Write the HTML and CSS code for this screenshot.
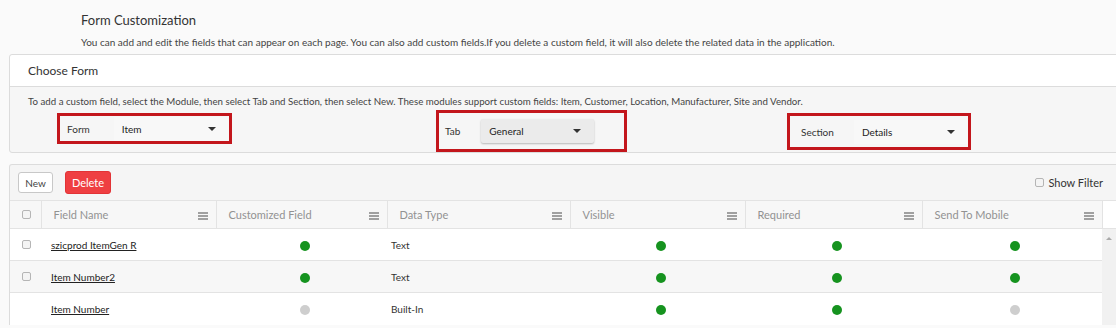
FILE: index.html
```html
<!DOCTYPE html>
<html lang="en">
<head>
    <meta charset="UTF-8">
    <title>Form Customization</title>
    <link rel="stylesheet" href="styles.css">
</head>
<body>
    <div class="page-head">
        <h2>Form Customization</h2>
        <p>You can add and edit the fields that can appear on each page. You can also add custom fields.If you delete a custom field, it will also delete the related data in the application.</p>
    </div>

    <div class="panel">
        <div class="panel-title">Choose Form</div>
        <div class="panel-body">
            <p class="hint">To add a custom field, select the Module, then select Tab and Section, then select New. These modules support custom fields: Item, Customer, Location, Manufacturer, Site and Vendor.</p>
            <div class="pickers">
                <div class="picker picker-form">
                    <span class="picker-label">Form</span>
                    <div class="select">Item<span class="caret"></span></div>
                </div>
                <div class="picker picker-tab">
                    <span class="picker-label">Tab</span>
                    <div class="select raised">General<span class="caret"></span></div>
                </div>
                <div class="picker picker-section">
                    <span class="picker-label">Section</span>
                    <div class="select">Details<span class="caret"></span></div>
                </div>
            </div>
        </div>
    </div>

    <div class="panel grid-panel">
        <div class="toolbar">
            <button class="btn">New</button>
            <button class="btn btn-danger">Delete</button>
            <label class="filter"><span class="check"></span>Show Filter</label>
        </div>
        <table class="grid">
            <colgroup>
                <col style="width:31px">
                <col style="width:175px">
                <col style="width:171px">
                <col style="width:183px">
                <col style="width:175px">
                <col style="width:177px">
                <col style="width:180px">
                <col style="width:15px">
            </colgroup>
            <thead>
                <tr>
                    <th class="cb"><span class="check"></span></th>
                    <th>Field Name<span class="menu"></span></th>
                    <th>Customized Field<span class="menu"></span></th>
                    <th>Data Type<span class="menu"></span></th>
                    <th>Visible<span class="menu"></span></th>
                    <th>Required<span class="menu"></span></th>
                    <th>Send To Mobile<span class="menu"></span></th>
                    <th class="sb-head"></th>
                </tr>
            </thead>
            <tbody>
                <tr>
                    <td class="cb"><span class="check"></span></td>
                    <td class="name"><a href="#">szicprod ItemGen R</a></td>
                    <td class="dot-cell"><span class="dot"></span></td>
                    <td class="type">Text</td>
                    <td class="dot-cell"><span class="dot"></span></td>
                    <td class="dot-cell"><span class="dot"></span></td>
                    <td class="dot-cell"><span class="dot"></span></td>
                    <td class="sb" rowspan="3"><span class="sb-up"></span></td>
                </tr>
                <tr class="alt">
                    <td class="cb"><span class="check"></span></td>
                    <td class="name"><a href="#">Item Number2</a></td>
                    <td class="dot-cell"><span class="dot"></span></td>
                    <td class="type">Text</td>
                    <td class="dot-cell"><span class="dot"></span></td>
                    <td class="dot-cell"><span class="dot"></span></td>
                    <td class="dot-cell"><span class="dot"></span></td>
                </tr>
                <tr>
                    <td class="cb"></td>
                    <td class="name"><a href="#">Item Number</a></td>
                    <td class="dot-cell"><span class="dot off"></span></td>
                    <td class="type">Built-In</td>
                    <td class="dot-cell"><span class="dot"></span></td>
                    <td class="dot-cell"><span class="dot"></span></td>
                    <td class="dot-cell"><span class="dot off"></span></td>
                </tr>
            </tbody>
        </table>
    </div>
</body>
</html>
```

FILE: styles.css
```css
* {
    margin: 0;
    padding: 0;
    box-sizing: border-box;
}

body {
    background: #fafafa;
    font-family: 'Lato', 'Open Sans', sans-serif;
    font-size: 11px;
    color: #333;
    overflow: hidden;
    width: 1116px;
    height: 328px;
}

.page-head {
    padding: 11px 0 0 81px;
    height: 54px;
}

.page-head h2 {
    font-size: 13px;
    font-weight: normal;
    color: #333;
    line-height: 18px;
}

.page-head p {
    margin-top: 6px;
    line-height: 14px;
    font-size: 10px;
    color: #444;
}

.panel {
    margin-left: 9px;
    width: 1120px;
    border: 1px solid #dcdcdc;
    border-radius: 3px;
    background: #f6f6f6;
}

.panel-title {
    height: 32px;
    line-height: 31px;
    padding-left: 18px;
    background: #fff;
    font-size: 12px;
    color: #333;
    border-bottom: 1px solid #dcdcdc;
    border-radius: 3px 3px 0 0;
}

.panel-body {
    padding: 7px 0 0 18px;
    height: 65px;
}

.hint {
    line-height: 14px;
    color: #444;
    font-size: 9.7px;
}

.pickers {
    display: flex;
    align-items: flex-start;
    margin-top: 2px;
    padding-left: 29px;
}

.picker {
    display: flex;
    align-items: center;
    border: 3px solid #c3161c;
    background: #f6f6f6;
}

.picker-label {
    font-size: 10px;
    color: #333;
}

.picker-form {
    width: 175px;
    height: 31px;
    margin-top: 3px;
    padding-left: 7px;
}

.picker-form .select {
    margin-left: 24px;
    width: 120px;
}

.picker-tab {
    width: 191px;
    height: 42px;
    margin-left: 204px;
    padding-left: 6px;
}

.picker-tab .select {
    margin-left: 21px;
    width: 113px;
}

.picker-section {
    width: 184px;
    height: 37px;
    margin-left: 160px;
    padding-left: 11px;
    margin-top: 3px;
}

.picker-section .select {
    margin-left: 20px;
    width: 129px;
}

.select {
    position: relative;
    height: 24px;
    line-height: 24px;
    padding-left: 8px;
    background: #f8f8f8;
    font-size: 10px;
    color: #222;
}

.select.raised {
    background: #ebebeb;
    border-radius: 2px;
    box-shadow: 0 1px 2px rgba(0, 0, 0, 0.25);
}

.caret {
    position: absolute;
    right: 13px;
    top: 10px;
    border-left: 4px solid transparent;
    border-right: 4px solid transparent;
    border-top: 4px solid #333;
}

.grid-panel {
    margin-top: 11px;
    background: #f5f5f5;
    border-bottom: none;
    border-radius: 3px 0 0 0;
}

.toolbar {
    display: flex;
    align-items: center;
    height: 35px;
    padding-left: 8px;
    padding-right: 14px;
    width: 1107px;
}

.btn {
    font-family: inherit;
    font-size: 10px;
    height: 21px;
    border-radius: 3px;
    cursor: pointer;
}

.btn:first-child {
    width: 35px;
    background: #fff;
    border: 1px solid #c8c8c8;
    color: #444;
}

.btn-danger {
    margin-left: 12px;
    width: 46px;
    height: 23px;
    background: #ef3f42;
    border: 1px solid #e23336;
    color: #fff;
    font-size: 11px;
}

.filter {
    margin-left: auto;
    display: flex;
    align-items: center;
    gap: 4px;
    font-size: 11px;
    color: #333;
}

.check {
    display: inline-block;
    width: 9px;
    height: 9px;
    border: 1px solid #b5b5b5;
    border-radius: 2px;
    background: #f4f4f4;
}

.grid {
    border-collapse: collapse;
    table-layout: fixed;
    width: 1107px;
}

.grid th {
    position: relative;
    height: 28px;
    text-align: left;
    font-weight: normal;
    font-size: 11px;
    color: #929292;
    padding-left: 12px;
    padding-bottom: 1px;
    border-top: 1px solid #e3e3e3;
    border-left: 1px solid #e3e3e3;
    background: #f7f7f7;
}

.grid th.cb {
    border-left: none;
    padding-left: 12px;
}

.grid th.sb-head {
    background: #fff;
}

/* three-bar column menu icon */
.menu {
    position: absolute;
    right: 8px;
    top: 11px;
    width: 10px;
    height: 8px;
    border-top: 2px solid #a0a0a0;
    border-bottom: 2px solid #a0a0a0;
}

.menu::after {
    content: "";
    position: absolute;
    left: 0;
    right: 0;
    top: 1px;
    height: 2px;
    background: #a0a0a0;
}

.grid td {
    height: 32px;
    border-top: 1px solid #e3e3e3;
    background: #fff;
    font-size: 10px;
    color: #333;
}

.grid tr.alt td {
    background: #f7f7f7;
}

.grid td.cb {
    padding-left: 12px;
}

.grid td.name {
    padding-left: 10px;
}

.name a {
    color: #222;
    text-decoration: underline;
}

.grid td.type {
    padding-left: 4px;
}

.dot-cell {
    text-align: center;
}

.dot {
    display: inline-block;
    width: 10px;
    height: 10px;
    border-radius: 50%;
    background: #16931f;
    margin-left: 6px;
    vertical-align: middle;
}

.dot.off {
    background: #cecece;
}

.grid td.sb {
    background: #f1f1f1;
    vertical-align: top;
    padding: 8px 0 0 4px;
}

.sb-up {
    display: block;
    border-left: 3px solid transparent;
    border-right: 3px solid transparent;
    border-bottom: 3px solid #aaa;
    width: 0;
}
```
